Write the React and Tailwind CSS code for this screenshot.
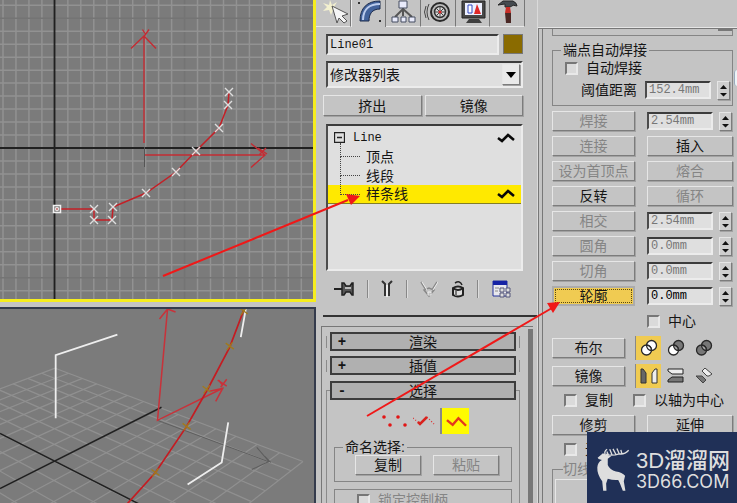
import clsx from 'clsx';

const raised =
  'border border-t-[#e6e6e6] border-l-[#e6e6e6] border-r-[#7c7c7c] border-b-[#7c7c7c] shadow-[1px_1px_0_#a2a2a2]';
const sunken =
  'border-2 border-t-[#3c3c3c] border-l-[#4c4c4c] border-r-[#ececec] border-b-[#ececec]';

function Button({ children, active, className, ...props }) {
  return (
    <button
      type="button"
      className={clsx(
        'flex h-5 items-center justify-center text-sm leading-4 whitespace-nowrap disabled:text-[#858585]',
        active
          ? 'border-2 border-[#ababab] bg-[#f0cb52] outline-1 -outline-offset-4 outline-dotted outline-[#5a4a10]'
          : raised,
        className,
      )}
      {...props}
    >
      {children}
    </button>
  );
}

function NumberField({ value, label, disabled, id }) {
  return (
    <div className="flex items-center gap-1.5">
      <input
        id={id}
        aria-label={label}
        defaultValue={value}
        disabled={disabled}
        className={clsx(
          sunken,
          'h-[18px] w-[66px] bg-[#dfdfdf] pl-0.5 font-["Liberation_Mono",monospace] text-xs leading-3 text-black disabled:text-[#777]',
        )}
      />
      <button type="button" aria-label={`${label}微调`} className={clsx(raised, 'h-[19px] w-[13px] bg-[#cecece]')}>
        <svg viewBox="0 0 11 17" className="h-[17px] w-[11px]">
          <path d="M5.5 3 9 7H2zM5.5 14.500 2 11h7z" fill="#111" />
        </svg>
      </button>
    </div>
  );
}

function Check({ children, disabled }) {
  return (
    <label className={clsx('flex h-5 items-center gap-2 text-sm leading-4 whitespace-nowrap', disabled && 'text-[#858585]')}>
      <input
        type="checkbox"
        disabled={disabled}
        className="h-[13px] w-[13px] shrink-0 appearance-none border-2 border-t-[#777] border-r-[#e8e8e8] border-b-[#e8e8e8] border-l-[#777] bg-[#dadada] checked:bg-[#444]"
      />
      {children}
    </label>
  );
}

const points = [
  [94, 209], [94, 220], [112, 220], [113, 207], [146, 193], [176, 172], [196, 151], [219, 128], [228, 105], [229, 92],
];

function FrontViewport() {
  const cols = Array.from({ length: 60 }, (_, i) => 3 + i * 12.97);
  const rows = Array.from({ length: 50 }, (_, i) => 5.3 + i * 12.97);
  return (
    <svg viewBox="0 0 313 299" preserveAspectRatio="xMinYMin slice" className="block h-full w-full bg-[#7b7b7b]">
      <g strokeWidth="1.5">
        {cols.map((x, i) => (
          <path key={x} d={`M${x} 0V700`} stroke={i % 10 === 4 ? '#747474' : '#929292'} />
        ))}
        {rows.map((y, i) => (
          <path key={y} d={`M0 ${y}H800`} stroke={i % 10 === 1 ? '#747474' : '#929292'} />
        ))}
      </g>
      <path d="M54.500 0V700M0 148H800" stroke="#202020" strokeWidth="1.8" />
      <g fill="none" stroke="#c42c33" strokeWidth="1.4">
        <path d="M144 143V36M131 48.500 144 36 156 48.500M142.500 29.500 145 33.500M149 29.500 144 36.500" />
        <path d="M145 155H264M251 143.500 265 155 251 167.500M258 148 267 154M266 148 259 155" />
      </g>
      <path d="M144.500 147V167" stroke="#555" />
      <path d={`M57 209L${points.map((p) => p.join(' ')).join('L')}`} fill="none" stroke="#c32027" strokeWidth="1.5" />
      {points.map(([x, y]) => (
        <path key={`${x}-${y}`} d={`M${x - 4} ${y - 4}l8 8m0-8l-8 8`} stroke="#dedede" strokeWidth="1.400" />
      ))}
      <rect x="53.500" y="205.500" width="7" height="7" fill="#777" stroke="#f2f2f2" strokeWidth="1.500" />
      <circle cx="57" cy="209" r="1.800" fill="#c88" stroke="#eee" />
    </svg>
  );
}

// Ground plane projected from a 14 x 14 square
function project(a, b) {
  const k = 0.739;
  const w = 1 + (a + b) * (k - 1);
  const x = (55 + a * (k * 302 - 55) + b * (k * -194 - 55)) / w;
  const y = (368 + (a + b) * (k * 461 - 368)) / w;
  return `${x.toFixed(1)} ${y.toFixed(1)}`;
}

function PerspectiveViewport() {
  const steps = Array.from({ length: 15 }, (_, i) => i / 14);
  return (
    <svg viewBox="0 309 313 194" preserveAspectRatio="xMinYMin slice" className="block h-full w-full bg-[#7b7b7b]">
      {steps.map((t) => (
        <path
          key={t}
          d={`M${project(t, 0)}L${project(t, 1)}M${project(0, t)}L${project(1, t)}`}
          stroke="#909090"
          strokeWidth="1.200"
        />
      ))}
      <path d="M161 407 0 488M0 433 138 503" stroke="#202020" strokeWidth="1.600" />
      <path d="M157 420 267 461M256 447 268 461 251 469M264 456l6 6" fill="none" stroke="#5d5d5d" />
      <path d="M55.500 418V355L117 334.500M245 309 240 337M227.500 422 221 462 187 484" fill="none" stroke="#eee" strokeWidth="1.800" />
      <g fill="none" stroke="#c8323a" strokeWidth="1.500">
        <path d="M167 309 157 420 222 388M159 319 167 309 175 312M209 391 222 388 215 401M217 380l9 6m0-7-6 8m-2-7 4 5" />
      </g>
      <path d="M243 310 229 347 207 389 186 426 155 472 127 503" fill="none" stroke="#c41c22" strokeWidth="1.700" />
      {[[243, 311], [229, 346], [206, 389], [186, 426], [155, 472]].map(([x, y]) => (
        <path key={x} d={`M${x - 4} ${y - 3}l8 6m-1-7l-6 8`} stroke="#a07a1e" strokeWidth="1.300" />
      ))}
    </svg>
  );
}

const tabs = [
  ['创建', <><path d="m12 0 2 5 5-3-3 5 5 2-6 1-2 5-2-5-6 1 4-4-4-4 6 2z" fill="#f3f0cf" /><path d="m14 6 16 8-6 2 5 5-3 2-5-5-2 5z" fill="#f5f5f5" stroke="#555" /></>],
  ['修改', <><path d="M6 21C6 8 13 1 26 1v8c-8 0-11 5-11 12z" fill="#42629b" stroke="#1d2c4c" /><path d="M9 20C9 9 16 4 26 4" fill="none" stroke="#bacbed" strokeWidth="2" /><path d="M4 2h2v2H4zM25 20h2v2h-2z" fill="#333" /></>],
  ['层次', <><path d="M15 7v9M15 9 7 17M15 9l9 8" stroke="#555" strokeWidth="2" /><path d="M11 1h8v7h-8zM4 17h6v5H4zM13 17h5v5h-5zM21 17h6v5h-6z" fill="#e8eafa" stroke="#454c61" /></>],
  ['运动', <><circle cx="17" cy="12" r="9" fill="#bbb" stroke="#292929" strokeWidth="2" /><circle cx="17" cy="12" r="5.500" fill="#ddd" stroke="#333" strokeWidth="1.500" /><path d="M17 7v10M12 12h10M13.500 8.500l7 7m0-7-7 7" stroke="#444" /><circle cx="17" cy="12" r="1.500" fill="#d22" /><path d="M6 4q-4 8 0 16M3 6q-3 6 0 12" fill="none" stroke="#444" /></>],
  ['显示', <><path d="M4 1h23v17H4z" fill="#484848" stroke="#222" /><path d="M7 3h17v12H7z" fill="#edf0ff" /><path d="M10 5h4v8h-4z" fill="#fff" stroke="#3048c0" /><path d="m19 4 4 10h-7z" fill="#df2929" /><path d="M11 19h10l3 4H8z" fill="#3f3f3f" /></>],
  ['工具', <><path d="M6 5 11 1h10q4 2 4 5-4-2-7 1h-5V4Z" fill="#454b50" stroke="#282828" /><path d="M14 7h4l1 6h-6z" fill="#c92d26" /><path d="M13 13h6v10h-5z" fill="#4a2825" /></>],
];

function ModifierStack() {
  return (
    <ul className={clsx(sunken, 'h-[147px] bg-[#dfdfdf] pt-0.5 text-sm')}>
      <li className="flex h-[19px] items-center gap-2 pl-1.5">
        <svg viewBox="0 0 11 11" className="h-[11px] w-[11px]">
          <path d="M.5.5h10v10H.5zM3 5.500h5" fill="none" stroke="#222" strokeWidth="1.300" />
        </svg>
        <span className="flex-1 font-['Liberation_Mono',monospace] text-xs">Line</span>
        <Zigzag />
      </li>
      {['顶点', '线段', '样条线'].map((name) => (
        <li
          key={name}
          className={clsx('flex h-[19px] items-center pl-3', name === '样条线' && 'border-b border-[#837e25] bg-[#ffe900]')}
        >
          <span
            className={clsx(
              'w-5 self-start border-b border-l border-dotted border-[#444]',
              name === '顶点' ? '-mt-1 h-3.5' : '-mt-[9px] h-[19px]',
            )}
          />
          <span className="flex-1 pl-1.5 leading-4">{name}</span>
          {name === '样条线' && <Zigzag />}
        </li>
      ))}
    </ul>
  );
}

function Zigzag() {
  return (
    <svg viewBox="0 0 18 10" className="mr-1.5 h-[10px] w-[18px]">
      <path d="M1 5 5 8 11 2 17 7" fill="none" stroke="#080808" strokeWidth="2.500" />
    </svg>
  );
}

function StackTools() {
  return (
    <div className="mt-2 flex h-5 items-center justify-between pr-[11px] pl-2">
      <button type="button" aria-label="锁定堆栈">
        <svg viewBox="0 0 20 14" className="h-[14px] w-5"><path d="M0 7h8" stroke="#222" strokeWidth="2" /><path d="M8 1h2l2 3h4l2-3h1v12h-1l-2-3h-4l-2 3H8z" fill="#555" stroke="#222" strokeWidth="1.500" /><path d="M11 6h6" stroke="#ddd" strokeWidth="1.500" /></svg>
      </button>
      <i className="h-[18px] w-0.5 border-l border-[#888] bg-[#ddd]" />
      <button type="button" aria-label="显示最终结果">
        <svg viewBox="0 0 12 18" className="h-[18px] w-3"><path d="M1 1l3 3v12M11 1 8 4v12" fill="none" stroke="#333" strokeWidth="2" /><path d="M5 5h2v12H5z" fill="#eee" /></svg>
      </button>
      <i className="h-[18px] w-0.5 border-l border-[#888] bg-[#ddd]" />
      <button type="button" aria-label="使唯一" disabled>
        <svg viewBox="0 0 18 18" className="h-[18px] w-[18px]"><path d="m1 2 5 8M17 2l-5 8M4 10l5 6 5-6-5-2z" fill="none" stroke="#888" strokeWidth="1.500" /><path d="m2 2 5 8m11-8-5 8m-5 2h3v3H8z" fill="none" stroke="#eee" /></svg>
      </button>
      <button type="button" aria-label="移除">
        <svg viewBox="0 0 14 18" className="h-[18px] w-3.5"><path d="M2 8q5-3 10 0v7q-5 3-10 0z" fill="#ddd" stroke="#222" strokeWidth="2" /><path d="M2 8q5 4 10 0" fill="none" stroke="#222" strokeWidth="2" /><path d="M4 3q5-3 7 2" fill="none" stroke="#222" strokeWidth="1.500" /><path d="M5 11v5" stroke="#777" strokeWidth="2" /></svg>
      </button>
      <i className="h-[18px] w-0.5 border-l border-[#888] bg-[#ddd]" />
      <button type="button" aria-label="配置修改器集">
        <svg viewBox="0 0 20 18" className="h-[18px] w-5"><path d="M1 1h14v15H1z" fill="#e8e8ed" stroke="#24329b" /><path d="M1 1h14v4H1z" fill="#1522a5" /><path d="M3 8h4M3 11h3" stroke="#888" /><path d="M8 8h4v4H8zM14 8h4v4h-4zM8 13h4v4H8zM14 13h4v4h-4z" fill="#ddd" stroke="#55577b" /></svg>
      </button>
    </div>
  );
}

function Rollout({ sign, title }) {
  return (
    <div className={clsx('mx-1 border-x border-[#8a8a8a] px-[3px]', sign === '+' ? 'h-3' : 'h-2.5 border-t')}>
      <button
        type="button"
        className={clsx(
          'grid h-[19px] w-full grid-cols-[20px_1fr_20px] items-center border-2 border-[#3d3d3d] bg-[#b0b0b0] text-sm leading-4',
          sign === '+' ? '-mt-1' : '-mt-2.5',
        )}
      >
        <b className="font-['Liberation_Mono',monospace]">{sign}</b>
        <span>{title}</span>
      </button>
    </div>
  );
}

function CommandPanel() {
  return (
    <section className="flex w-[222px] shrink-0 flex-col overflow-hidden border-r border-[#dadada]">
      <nav className="flex h-[27px] shrink-0 pr-3">
        {tabs.map(([name, art]) => (
          <button
            key={name}
            type="button"
            aria-label={name}
            className={clsx(
              'flex flex-1 items-start justify-center border-r border-r-[#777]',
              name === '修改' ? 'border-l border-l-[#e8e8e8]' : 'border-b border-b-[#e8e8e8]',
            )}
          >
            <svg viewBox="0 0 30 24" className="h-6 w-[30px]">{art}</svg>
          </button>
        ))}
      </nav>
      <div className="flex flex-col pt-[7px] pr-[14px] pl-[10px]">
        <div className="flex gap-1">
          <input
            aria-label="对象名称"
            defaultValue="Line01"
            className={clsx(sunken, 'h-[21px] min-w-0 flex-1 bg-[#dfdfdf] pl-0.5 font-["Liberation_Mono",monospace] text-xs')}
          />
          <button type="button" aria-label="对象颜色" className="h-5 w-5 border border-[#777] bg-[#8a6b00]" />
        </div>
        <div className="relative mt-1.5">
          <select
            aria-label="修改器列表"
            className={clsx(sunken, 'h-[27px] w-full appearance-none bg-[#dfdfdf] pl-0.5 text-sm leading-4')}
          >
            <option>修改器列表</option>
          </select>
          <span className={clsx(raised, 'pointer-events-none absolute top-[3px] right-[3px] flex h-[21px] w-[18px] items-center justify-center bg-[#e9e9e9]')}>
            <svg viewBox="0 0 10 6" className="h-1.5 w-2.5"><path d="M0 0h10L5 6z" /></svg>
          </span>
        </div>
        <div className="mt-[7px] -ml-[3px] grid grid-cols-2 gap-[3px]">
          <Button className="h-[21px]">挤出</Button>
          <Button className="h-[21px]">镜像</Button>
        </div>
        <div className="mt-2">
          <ModifierStack />
        </div>
        <StackTools />
      </div>
      <div className="mt-4 ml-[7px] border-t-2 border-[#333]" />
      <div className="mt-[9px] mr-1 ml-[5px] flex min-h-0 flex-1 overflow-hidden border-t border-l border-[#777]">
        <div className="min-w-0 flex-1 pt-[9px]">
          <div className="flex flex-col gap-3 pr-1">
            <Rollout sign="+" title="渲染" />
            <Rollout sign="+" title="插值" />
          </div>
          <div className="mt-[18px] pr-1">
            <Rollout sign="-" title="选择" />
          </div>
          <div className="mr-2 ml-1 h-40 border-x border-[#8a8a8a] px-[7px] pt-2">
            <div className="flex h-[26px] items-center justify-center gap-[5px] pl-1">
              <button type="button" aria-label="顶点">
                <svg viewBox="0 0 26 14" className="h-3.5 w-[26px]"><g fill="#e21616"><circle cx="2" cy="3" r="1.800" /><circle cx="8" cy="11" r="1.800" /><circle cx="16" cy="3" r="1.800" /><circle cx="23" cy="11" r="1.800" /></g></svg>
              </button>
              <button type="button" aria-label="线段">
                <svg viewBox="0 0 22 12" className="h-3 w-[22px]"><path d="m0 3 6 5M14 2l7 7" stroke="#d33" strokeDasharray="1 2" strokeWidth="1.300" /><path d="m5 7 2 2 7-7" fill="none" stroke="#d9221d" strokeWidth="2.500" /></svg>
              </button>
              <button type="button" aria-label="样条线" className="h-[26px] w-[29px] border-l-2 border-[#888] bg-[#fffb00] p-1">
                <svg viewBox="0 0 22 14" className="h-3.5 w-[21px]"><path d="m1 6 6 5 6-7 8 8" fill="none" stroke="#e4391d" strokeWidth="2.500" /></svg>
              </button>
            </div>
            <fieldset className="mt-[3px] h-[45px] border border-[#858585] pl-5 text-sm">
              <legend className="-ml-3 h-5 px-0.5 leading-5">命名选择:</legend>
              <div className="-mt-0.5 flex gap-3">
                <Button className="w-[66px]">复制</Button>
                <Button className="w-[66px]" disabled>粘贴</Button>
              </div>
            </fieldset>
            <div className="mt-[7px] h-12 border border-[#858585] pl-[22px]">
              <Check disabled>锁定控制柄</Check>
            </div>
          </div>
        </div>
        <div className="mt-0.5 w-[5px] bg-[#777]" />
      </div>
    </section>
  );
}

function Circles({ left, right, overlap }) {
  return (
    <svg viewBox="0 0 18 18" className="h-[18px] w-[18px]">
      <g stroke="#282828" strokeWidth="1.300">
        <circle cx="11.500" cy="6.500" r="5" fill={right} />
        <circle cx="6.500" cy="11" r="5" fill={left} />
        <path d="M6.600 6.100A5 5 0 0 1 11.400 11.500 5 5 0 0 1 6.600 6.100" fill={overlap} />
      </g>
    </svg>
  );
}

function IconToggle({ label, active, children }) {
  return (
    <button
      type="button"
      aria-label={label}
      className={clsx('flex h-6 w-[26px] items-center justify-center', active && 'border-l border-[#888] bg-[#f0cb52]')}
    >
      {children}
    </button>
  );
}

const operations = [
  [{ name: '焊接', off: true }, { value: '2.54mm', off: true }],
  [{ name: '连接', off: true }, { name: '插入' }],
  [{ name: '设为首顶点', off: true }, { name: '熔合', off: true }],
  [{ name: '反转' }, { name: '循环', off: true }],
  [{ name: '相交', off: true }, { value: '2.54mm', off: true }],
  [{ name: '圆角', off: true }, { value: '0.0mm', off: true }],
  [{ name: '切角', off: true }, { value: '0.0mm', off: true }],
  [{ name: '轮廓', active: true }, { value: '0.0mm' }],
];

function GeometryPanel() {
  return (
    <section className="w-[199px] shrink-0 overflow-hidden pt-[27px]">
      <div className="h-full border-t border-[#e6e6e6]">
        <div className="h-full border-t border-l border-[#777] pl-[3px]">
          <div className="h-full border-l border-[#777] pr-1 pl-[9px]">
            <div className="flex h-[7px] justify-end border-x border-b border-[#858585]"><i className="h-0.5 w-3.5 bg-[#777]" /></div>
            <fieldset className="mt-1 h-[66px] border border-[#858585] text-sm">
              <legend className="ml-2 px-0.5 leading-5">端点自动焊接</legend>
              <div className="-mt-0.5 pl-3">
                <Check>自动焊接</Check>
              </div>
              <div className="flex items-center justify-end gap-2 pt-0.5 pr-0.5">
                <label htmlFor="threshold" className="leading-5">阈值距离</label>
                <NumberField id="threshold" label="阈值距离" value="152.4mm" disabled />
              </div>
            </fieldset>
            <div className="mt-[5px] grid grid-cols-[83px_1fr] gap-x-3 gap-y-[5px]">
              {operations.map(([op, other]) => [
                <Button key={op.name} disabled={op.off} active={op.active}>{op.name}</Button>,
                other.value ? (
                  <NumberField key={`${op.name}-value`} label={op.name} value={other.value} disabled={other.off} />
                ) : (
                  <Button key={other.name} disabled={other.off}>{other.name}</Button>
                ),
              ])}
              <div className="col-start-2"><Check>中心</Check></div>
            </div>
            <div className="mt-[5px] flex flex-col gap-1">
              <div className="flex items-center gap-[10px]">
                <Button className="w-[73px]">布尔</Button>
                <div className="flex gap-0.5">
                  <IconToggle label="并集" active><Circles left="#fff" right="#fff" overlap="#fff" /></IconToggle>
                  <IconToggle label="差集"><Circles left="#fff" right="#777" overlap="#aaa" /></IconToggle>
                  <IconToggle label="相交"><Circles left="#777" right="#777" overlap="#aaa" /></IconToggle>
                </div>
              </div>
              <div className="flex items-center gap-[10px]">
                <Button className="w-[73px]">镜像</Button>
                <div className="flex gap-0.5">
                  <IconToggle label="水平镜像" active>
                    <svg viewBox="0 0 18 16" className="h-4 w-[18px]"><path d="M1 1h2l3 4v10H1z" fill="#666" stroke="#333" /><path d="M17 1h-2l-3 4v10h5z" fill="#eee" stroke="#333" /></svg>
                  </IconToggle>
                  <IconToggle label="垂直镜像">
                    <svg viewBox="0 0 18 16" className="h-4 w-[18px]"><path d="M1 1h15v5H5L1 3z" fill="#eee" stroke="#222" /><path d="M5 9h11v5H1v-2z" fill="#777" stroke="#222" /></svg>
                  </IconToggle>
                  <IconToggle label="双向镜像">
                    <svg viewBox="0 0 18 16" className="h-4 w-[18px]"><path d="m7 3 3-3 7 6-3 2h-2z" fill="#eee" stroke="#444" /><path d="M1 8h6l4 4-3 3z" fill="#777" stroke="#444" /></svg>
                  </IconToggle>
                </div>
              </div>
            </div>
            <div className="mt-0.5 flex gap-5 pl-3">
              <Check>复制</Check>
              <Check>以轴为中心</Check>
            </div>
            <div className="mt-[5px] grid grid-cols-[83px_1fr] gap-x-3">
              <Button>修剪</Button>
              <Button>延伸</Button>
            </div>
            <div className="mt-1 pl-3"><Check>无限边界</Check></div>
            <fieldset className="h-20 border border-[#858585] px-0.5 text-sm text-[#858585]">
              <legend className="ml-2 leading-5">切线</legend>
              <Button className="h-[34px] w-20" aria-label="复制切线" disabled />
            </fieldset>
          </div>
        </div>
      </div>
    </section>
  );
}

function Watermark() {
  return (
    <div className="absolute right-0 bottom-0 flex h-[71px] w-[150px] items-center gap-1.5 bg-[#203057] pt-1 pl-[9px] text-[#dedede]">
      <svg viewBox="30 60 104 136" className="h-[45px] w-[34px] shrink-0">
        <path d="M35 92 45 84 51 78 60 82 77 87 66 95 66 114Q72 129 91 134 110 136 119 147L115 164 120 193H112L103 170 98 160Q83 162 66 156L61 171 62 193H52L49 164Q33 143 34 122 35 106 48 99L38 96Z" fill="currentColor" />
        <path d="M58 82Q54 72 64 66M60 81Q78 88 101 80 117 83 130 69M68 83 63 73M79 83 72 66M91 82 82 65M101 80 94 64M109 79 106 68" fill="none" stroke="currentColor" strokeWidth="4" />
      </svg>
      <div className="whitespace-nowrap">
        <div className="text-[22px] leading-6 font-medium">3D溜溜网</div>
        <div className="font-[Inter,sans-serif] text-lg leading-[18px]">3D66.COM</div>
      </div>
    </div>
  );
}

function Arrows() {
  return (
    <svg className="pointer-events-none absolute top-0 left-0 h-full w-full" stroke="#f01818" strokeWidth="2" fill="#f01818">
      <path d="M163 276 348 200" />
      <path d="m360 196-9 9-5-11z" stroke="none" />
      <path d="M367 416 552 308" />
      <path d="m560 302-7 11-6-10z" stroke="none" />
    </svg>
  );
}

export default function App() {
  return (
    <main className="relative flex h-screen w-full overflow-hidden bg-[#c4c4c4] font-['Liberation_Sans','Noto_Sans_CJK_SC',sans-serif] text-sm text-[#151515]">
      <div className="flex min-w-0 flex-1 flex-col gap-[5px]">
        <div className="min-h-0 flex-[302] border-r-3 border-b-3 border-[#f6ed1e]"><FrontViewport /></div>
        <div className="min-h-0 flex-[196] border-t-2 border-r-2 border-[#343b4c]"><PerspectiveViewport /></div>
      </div>
      <CommandPanel />
      <GeometryPanel />
      <Arrows />
      <span className="absolute top-[70px] right-0 h-4 w-[3px] rounded-l-full border-l border-[#9ab] bg-[#edf4f7]" />
      <Watermark />
    </main>
  );
}
